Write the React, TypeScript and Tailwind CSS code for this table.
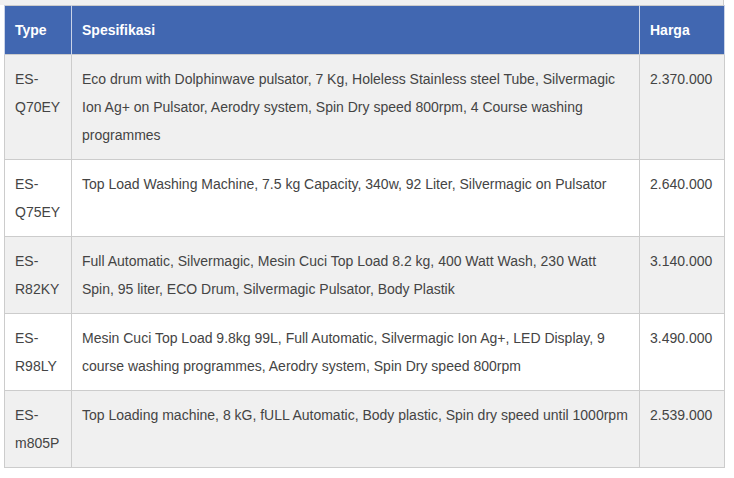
const rows = [
  {
    type: ["ES-", "Q70EY"],
    spec: "Eco drum with Dolphinwave pulsator, 7 Kg, Holeless Stainless steel Tube, Silvermagic Ion Ag+ on Pulsator, Aerodry system, Spin Dry speed 800rpm, 4 Course washing programmes",
    price: "2.370.000",
  },
  {
    type: ["ES-", "Q75EY"],
    spec: "Top Load Washing Machine, 7.5 kg Capacity, 340w, 92 Liter, Silvermagic on Pulsator",
    price: "2.640.000",
  },
  {
    type: ["ES-", "R82KY"],
    spec: "Full Automatic, Silvermagic, Mesin Cuci Top Load 8.2 kg, 400 Watt Wash, 230 Watt Spin, 95 liter, ECO Drum, Silvermagic Pulsator, Body Plastik",
    price: "3.140.000",
  },
  {
    type: ["ES-", "R98LY"],
    spec: "Mesin Cuci Top Load 9.8kg 99L, Full Automatic, Silvermagic Ion Ag+, LED Display, 9 course washing programmes, Aerodry system, Spin Dry speed 800rpm",
    price: "3.490.000",
  },
  {
    type: ["ES-", "m805P"],
    spec: "Top Loading machine, 8 kG, fULL Automatic, Body plastic, Spin dry speed until 1000rpm",
    price: "2.539.000",
  },
];

export default function App() {
  return (
    <div className="w-[734px] h-[478px] bg-white font-['Liberation_Sans',Arial,sans-serif] text-[14px] leading-[28px] text-[#444]">
      {/* tail of the previous block */}
      <div className="h-[5px] w-[724px] bg-[#f0f0f0] border-r border-[#ccc]" />

      <table className="ml-[4px] w-[720px] table-fixed border-collapse border border-[#ccc]">
        <colgroup>
          <col className="w-[67px]" />
          <col className="w-[568px]" />
          <col className="w-[85px]" />
        </colgroup>
        <thead>
          <tr className="bg-[#4167b1] text-white font-bold text-left">
            <th className="px-[10px] py-[10px] border-x border-[#c9d3e8] align-top">Type</th>
            <th className="px-[10px] py-[10px] border-x border-[#c9d3e8] align-top">Spesifikasi</th>
            <th className="px-[10px] py-[10px] border-x border-[#c9d3e8] align-top">Harga</th>
          </tr>
        </thead>
        <tbody>
          {rows.map((row, i) => (
            <tr key={i} className={i % 2 === 0 ? "bg-[#f0f0f0]" : "bg-white"}>
              <td className="px-[10px] py-[10px] border border-[#ccc] align-top">
                {row.type[0]}
                <br />
                {row.type[1]}
              </td>
              <td className="px-[10px] py-[10px] border border-[#ccc] align-top">{row.spec}</td>
              <td className="px-[10px] py-[10px] border border-[#ccc] align-top">{row.price}</td>
            </tr>
          ))}
        </tbody>
      </table>
    </div>
  );
}
